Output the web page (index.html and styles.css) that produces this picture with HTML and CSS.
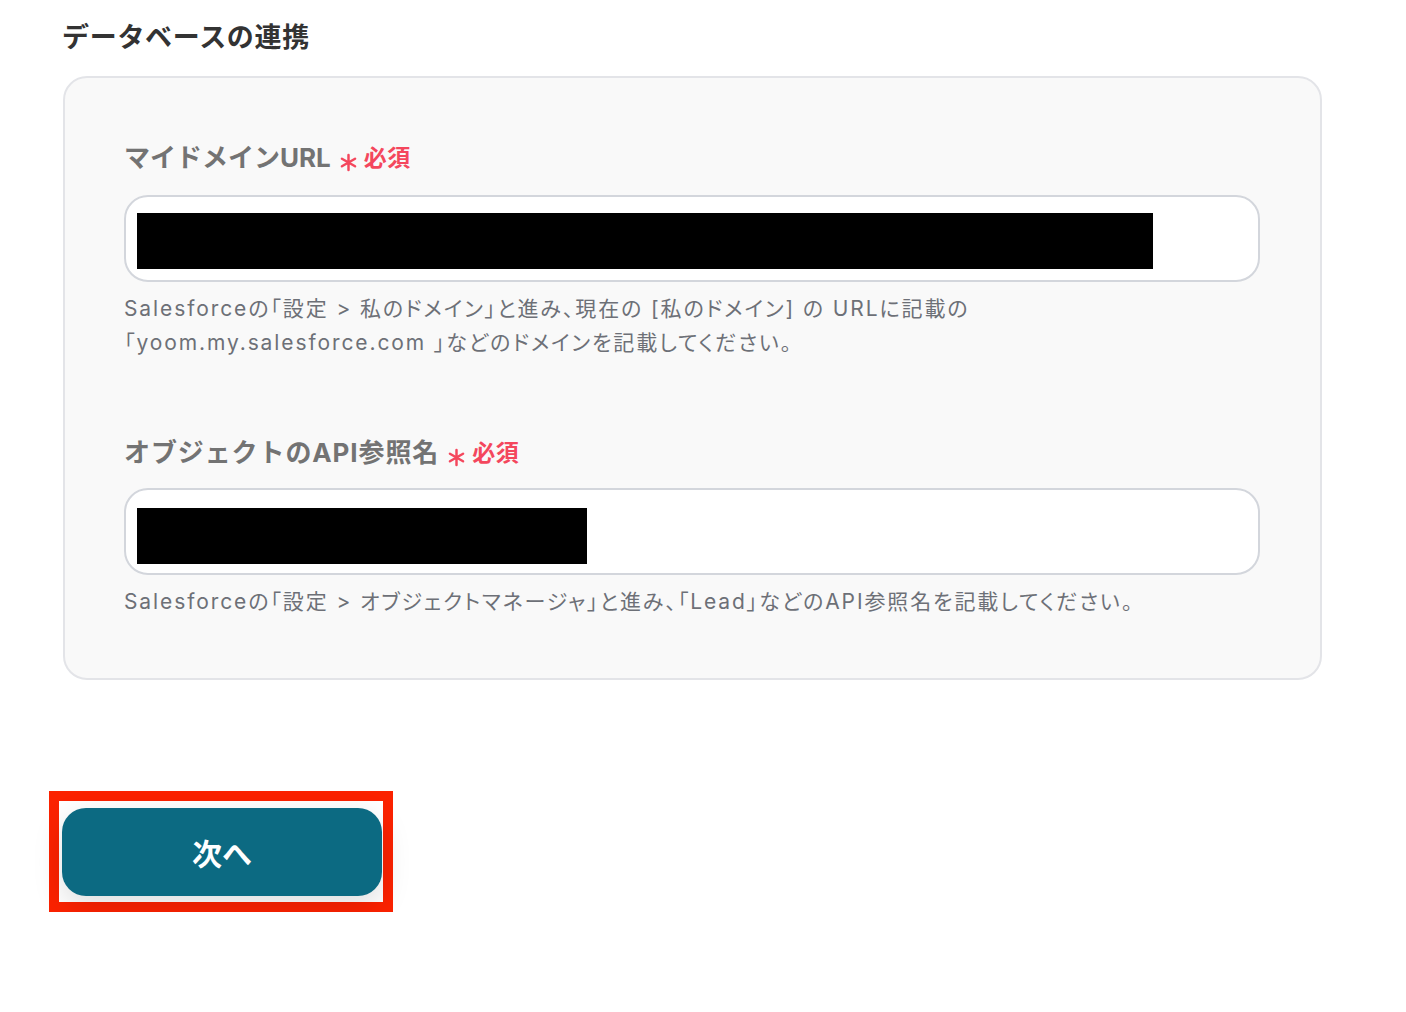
FILE: index.html
```html
<!DOCTYPE html>
<html lang="ja">
<head>
<meta charset="utf-8">
<link rel="stylesheet" href="styles.css">
</head>
<body>
<div class="page">
  <h2 class="title">データベースの連携</h2>
  <section class="card">
    <div class="field">
      <div class="label">マイドメインURL<span class="req"><svg class="ast" viewBox="0 0 20 20"><path d="M10 2v16M3.1 6l13.8 8M3.1 14l13.8-8" stroke="currentColor" stroke-width="2.6" stroke-linecap="round"/></svg>必須</span></div>
      <div class="input"><div class="mask mask-1"></div></div>
      <p class="help">Salesforceの「設定 &gt; 私のドメイン」と進み、現在の [私のドメイン] の URLに記載の<br>「yoom.my.salesforce.com 」などのドメインを記載してください。</p>
    </div>
    <div class="field field-2">
      <div class="label">オブジェクトのAPI参照名<span class="req"><svg class="ast" viewBox="0 0 20 20"><path d="M10 2v16M3.1 6l13.8 8M3.1 14l13.8-8" stroke="currentColor" stroke-width="2.6" stroke-linecap="round"/></svg>必須</span></div>
      <div class="input"><div class="mask mask-2"></div></div>
      <p class="help">Salesforceの「設定 &gt; オブジェクトマネージャ」と進み、「Lead」などのAPI参照名を記載してください。</p>
    </div>
  </section>
  <div class="actions">
    <div class="highlight">
      <button class="next">次へ</button>
    </div>
  </div>
</div>
</body>
</html>
```
FILE: styles.css
```css
* { box-sizing: border-box; }
html, body { margin: 0; padding: 0; background: #fff; }
body {
  font-family: "Inter", "Noto Sans CJK JP", sans-serif;
  color: #333;
}
.page {
  padding: 20px 0 0 62px;
  width: 1322px;
}
.title {
  margin: 0;
  font-size: 27px;
  line-height: 36px;
  font-weight: 700;
  color: #333;
  letter-spacing: 0.7px;
}
.card {
  margin-top: 20px;
  margin-left: 1px;
  width: 1259px;
  border: 2px solid #e3e4e8;
  border-radius: 24px;
  background: #f9f9f9;
  padding: 62px 60px 59px 59px;
}
.field-2 { margin-top: 75px; }
.label {
  display: flex;
  align-items: center;
  font-size: 26px;
  line-height: 36px;
  font-weight: 700;
  color: #737373;
}
.field-2 .label { letter-spacing: 0.9px; }
.req {
  display: inline-flex;
  align-items: center;
  margin-left: 8px;
  color: #f4475d;
  font-size: 23px;
  font-weight: 700;
  letter-spacing: 0.5px;
}
.ast {
  width: 19px;
  height: 19px;
  margin-right: 6px;
  margin-top: 8px;
}
.input {
  margin-top: 19px;
  height: 87px;
  width: 1136px;
  background: #fff;
  border: 2px solid #d3d6dc;
  border-radius: 24px;
  padding: 16px 11px;
}
.field-2 .input { margin-top: 17px; padding-top: 18px; }
.mask { background: #000; height: 56px; }
.mask-1 { width: 1016px; }
.mask-2 { width: 450px; }
.help {
  margin: 10px 0 0;
  font-size: 21px;
  line-height: 34px;
  color: #6d7077;
  font-weight: 400;
  letter-spacing: 1.9px;
  font-feature-settings: "palt";
}
.field-2 .help { margin-top: 10px; }
.actions {
  margin-top: 111px;
  margin-left: -13px;
}
.highlight {
  display: inline-block;
  border: 10px solid #fb2200;
  padding: 7px 1px 6px 3px;
}
.next {
  display: block;
  width: 320px;
  height: 88px;
  border: none;
  border-radius: 24px;
  background: #0c6a82;
  color: #fff;
  font-family: "Noto Sans CJK JP", "Inter", sans-serif;
  font-size: 30px;
  font-weight: 700;
  box-shadow: 0 10px 30px rgba(0, 0, 0, 0.13);
  cursor: pointer;
}
```
